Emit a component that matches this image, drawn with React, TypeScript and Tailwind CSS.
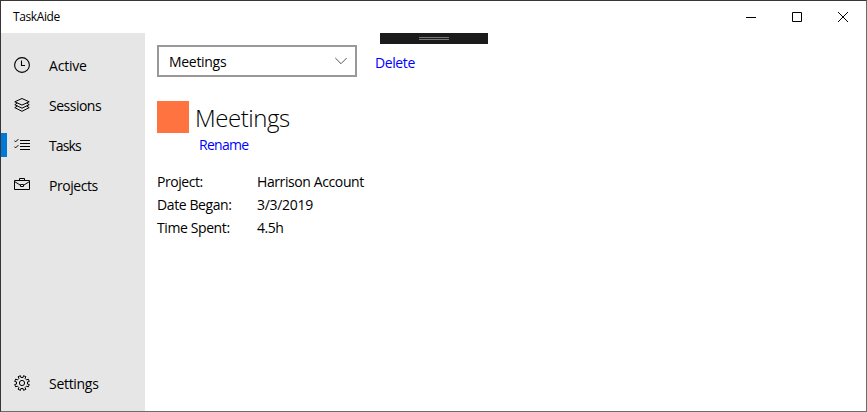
import type { ReactNode } from "react";

const ClockIcon = () => (
  <svg width="16" height="16" viewBox="0 0 16 16" fill="none" stroke="#000" strokeWidth="1.1">
    <circle cx="8" cy="8" r="7.4" />
    <path d="M7.5 3.5V8.5H11" />
  </svg>
);

const LayersIcon = () => (
  <svg width="16" height="16" viewBox="0 0 16 16" fill="none" stroke="#000" strokeWidth="1">
    <path d="M8 1.5L15.2 4.8L8 8.1L.8 4.8Z" />
    <path d="M3.2 6.2L.8 7.7L8 11.2L15.2 7.7L12.8 6.2" />
    <path d="M3.2 9.2L.8 10.6L8 14.3L15.2 10.6L12.8 9.2" />
  </svg>
);

const ChecklistIcon = () => (
  <svg width="16" height="16" viewBox="0 0 16 16" fill="none" stroke="#000" strokeWidth="1">
    <path d="M6 3.5H16M6 6.5H16M6 9.5H16M6 12.5H16" />
    <path d="M0.3 3.6L1.6 4.9L4.4 2.1M0.3 9.6L1.6 10.9L4.4 8.1" />
  </svg>
);

const BriefcaseIcon = () => (
  <svg width="16" height="16" viewBox="0 0 16 16" fill="none" stroke="#000" strokeWidth="1">
    <path d="M0.5 3.5H15.5V12.5H0.5Z" />
    <path d="M5.5 3.5V1.5H10.5V3.5" />
    <path d="M0.5 4.5L6 8M15.5 4.5L10 8" />
    <path d="M6.5 7.5H9.5V9.5H6.5Z" />
  </svg>
);

const GearIcon = () => (
  <svg width="16" height="16" viewBox="0 0 16 16" fill="none" stroke="#000" strokeWidth="1">
    <path d="M6.9 2.5L6.5 .7L4.1 1.7L4.9 3.4L3.4 4.9L1.7 4.1L.7 6.5L2.5 6.9V9.1L.7 9.5L1.7 11.9L3.4 11.1L4.9 12.6L4.1 14.3L6.5 15.3L6.9 13.5H9.1L9.5 15.3L11.9 14.3L11.1 12.6L12.6 11.1L14.3 11.9L15.3 9.5L13.5 9.1V6.9L15.3 6.5L14.3 4.1L12.6 4.9L11.1 3.4L11.9 1.7L9.5 .7L9.1 2.5Z" />
    <circle cx="8" cy="8" r="2.6" />
  </svg>
);

function NavItem({ icon, label, tracking, active = false }: { icon: ReactNode; label: string; tracking: string; active?: boolean }) {
  return (
    <div className="flex h-10 items-center">
      <div className={`h-6 w-1.5 ${active ? "bg-[#0078d7]" : ""}`} />
      <div className="ml-[7px] flex w-[35px]">{icon}</div>
      <span className={`pt-0.5 text-[14px] leading-5 ${tracking}`}>{label}</span>
    </div>
  );
}

function Detail({ label, value, labelTracking, valueTracking }: { label: string; value: string; labelTracking: string; valueTracking: string }) {
  return (
    <div className="flex h-[23px] items-center">
      <dt className={`w-[100px] ${labelTracking}`}>{label}</dt>
      <dd className={valueTracking}>{value}</dd>
    </div>
  );
}

export default function App() {
  return (
    <div className="flex h-[412px] w-[867px] flex-col overflow-hidden border border-t-[#38383a] border-r-[#6c6c6c] border-b-[#6c6c6c] border-l-[#38353a] bg-white font-['Open_Sans','Noto_Sans',sans-serif] text-[14px] text-black">
      <header className="flex h-8 shrink-0 items-center justify-between">
        <span className="pl-3 text-[12px] leading-4 tracking-[-0.4px]">TaskAide</span>
        <div className="flex">
          <div className="flex w-[46px] justify-center">
            <svg width="10" height="10" stroke="#000"><path d="M0 5.5H10" /></svg>
          </div>
          <div className="flex w-[46px] justify-center">
            <svg width="10" height="10" fill="none" stroke="#000"><path d="M.5 .5H9.5V9.5H.5Z" /></svg>
          </div>
          <div className="flex w-[46px] justify-center">
            <svg width="10" height="10" fill="none" stroke="#000"><path d="M0 0L10 10M10 0L0 10" /></svg>
          </div>
        </div>
      </header>
      <div className="flex min-h-0 flex-1">
        <nav className="flex w-36 shrink-0 flex-col justify-between bg-[#e6e6e6] pt-3 pb-2">
          <div>
            <NavItem icon={<ClockIcon />} label="Active" tracking="tracking-[-0.2px]" />
            <NavItem icon={<LayersIcon />} label="Sessions" tracking="tracking-[-0.5px]" />
            <NavItem icon={<ChecklistIcon />} label="Tasks" tracking="tracking-[-0.9px]" active />
            <NavItem icon={<BriefcaseIcon />} label="Projects" tracking="tracking-[-0.45px]" />
          </div>
          <NavItem icon={<GearIcon />} label="Settings" tracking="tracking-[-0.3px]" />
        </nav>
        <main className="relative flex-1 pt-3 pl-3">
          <div className="absolute top-0 left-[235px] flex h-[11px] w-[108px] flex-col items-center gap-px bg-[#1b1b1b] pt-1">
            <div className="h-px w-[30px] bg-[#777]" />
            <div className="h-px w-[30px] bg-[#777]" />
          </div>
          <div className="flex items-center">
            <div className="flex h-8 w-[200px] items-center justify-between border-2 border-[#999] pr-2 pl-2.5">
              <span className="tracking-[-0.3px]">Meetings</span>
              <svg width="12" height="8" fill="none" stroke="#555"><path d="M.3 1L6 6.7L11.7 1" /></svg>
            </div>
            <a className="mt-0.5 ml-[18px] tracking-[-0.4px] text-[#0000ff]">Delete</a>
          </div>
          <div className="mt-6 flex h-8">
            <div className="h-8 w-8 bg-[#ff7340]" />
            <h1 className="ml-1.5 pt-px text-[24px] leading-8 font-light tracking-[-0.45px]">Meetings</h1>
          </div>
          <div className="mt-0.5 ml-[42px] h-5 leading-5 tracking-[-0.7px] text-[#0000ff]">Rename</div>
          <dl className="mt-[15px]">
            <Detail label="Project:" value="Harrison Account" labelTracking="tracking-[-0.45px]" valueTracking="tracking-[-0.4px]" />
            <Detail label="Date Began:" value="3/3/2019" labelTracking="tracking-[-0.4px]" valueTracking="tracking-[-0.3px]" />
            <Detail label="Time Spent:" value="4.5h" labelTracking="tracking-[-0.4px]" valueTracking="tracking-[-0.5px]" />
          </dl>
        </main>
      </div>
    </div>
  );
}
